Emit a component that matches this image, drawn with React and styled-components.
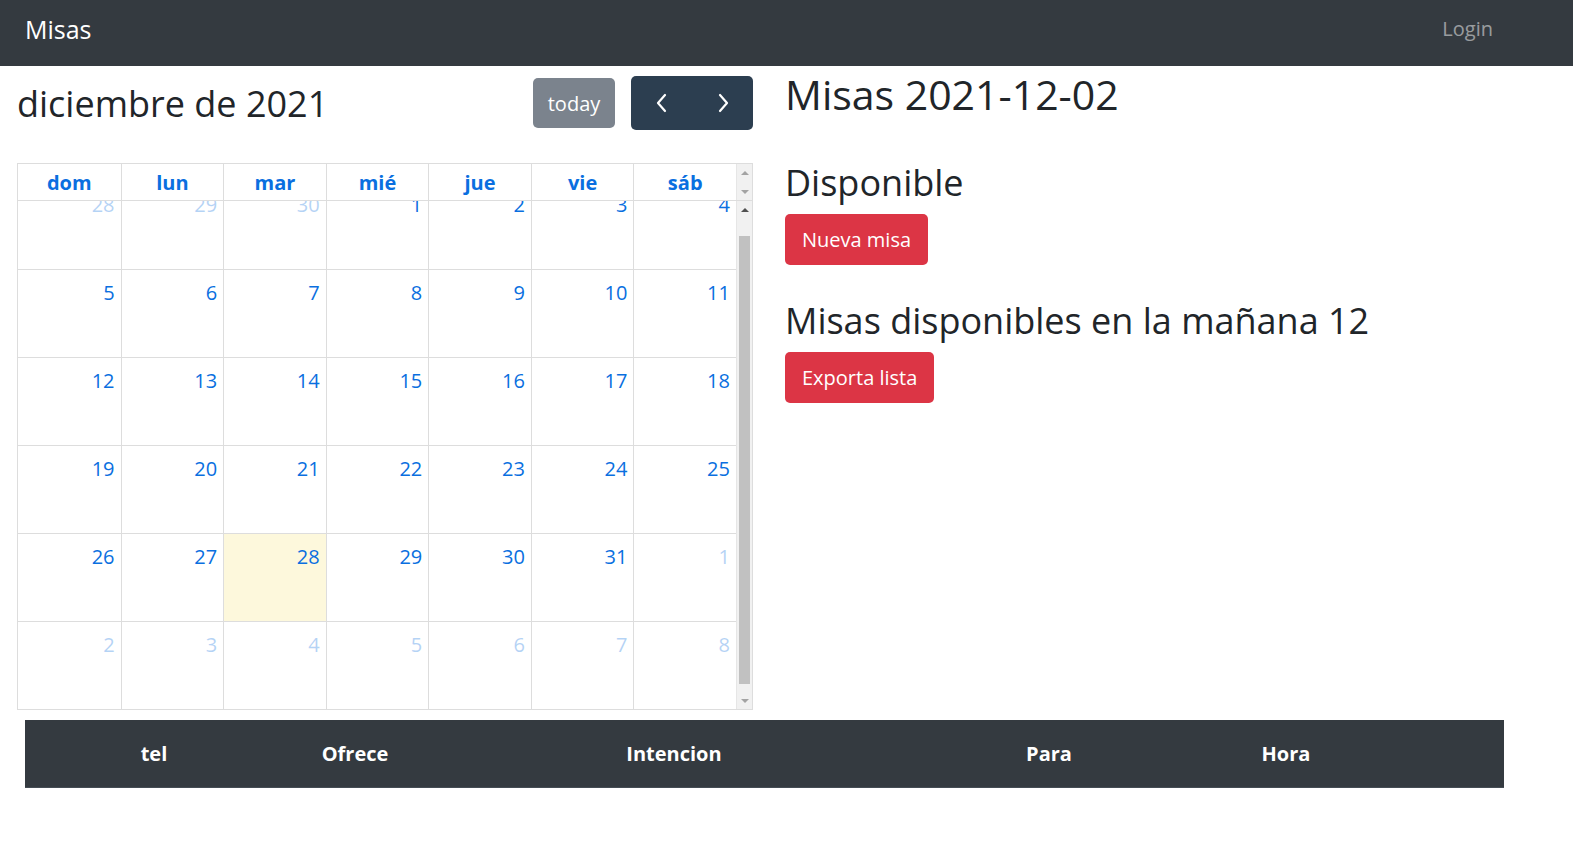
import React, { useEffect, useRef } from "react";
import styled, { createGlobalStyle } from "styled-components";

const GlobalStyle = createGlobalStyle`
  body {
    margin: 0;
    font-family: "Open Sans", "Noto Sans", sans-serif;
    font-size: 20px;
    color: #212529;
    background: #fff;
  }
  * { box-sizing: border-box; }
`;

const dayNames = ["dom", "lun", "mar", "mié", "jue", "vie", "sáb"];

const buildWeeks = () => {
  const weeks = [];
  const start = new Date(2021, 10, 28);
  for (let w = 0; w < 6; w++) {
    const row = [];
    for (let d = 0; d < 7; d++) {
      const date = new Date(start);
      date.setDate(start.getDate() + w * 7 + d);
      row.push({
        n: date.getDate(),
        other: date.getMonth() !== 11,
        today: date.getMonth() === 11 && date.getDate() === 28,
      });
    }
    weeks.push(row);
  }
  return weeks;
};

const Chevron = ({ dir }) => (
  <svg width="14" height="22" viewBox="0 0 14 22" fill="none" stroke="#fff" strokeWidth="2.2" strokeLinecap="round" strokeLinejoin="round">
    {dir === "left" ? <polyline points="10,3 3,11 10,19" /> : <polyline points="4,3 11,11 4,19" />}
  </svg>
);

const App = () => {
  const bodyRef = useRef(null);
  const weeks = buildWeeks();

  useEffect(() => {
    // the calendar body is scrolled a little, as in the screenshot
    if (bodyRef.current) bodyRef.current.scrollTop = 19;
  }, []);

  return (
    <>
      <GlobalStyle />
      <Navbar>
        <Brand>Misas</Brand>
        <NavLink>Login</NavLink>
      </Navbar>

      <Main>
        <Calendar>
          <Toolbar>
            <Title>diciembre de 2021</Title>
            <ToolButtons>
              <TodayBtn>today</TodayBtn>
              <BtnGroup>
                <NavBtn><Chevron dir="left" /></NavBtn>
                <NavBtn><Chevron dir="right" /></NavBtn>
              </BtnGroup>
            </ToolButtons>
          </Toolbar>

          <Grid>
            <HeadSection>
              <Row>
                {dayNames.map((d) => (
                  <HeadCell key={d}>{d}</HeadCell>
                ))}
              </Row>
              <Rail>
                <Arrow up faded />
                <Arrow faded />
              </Rail>
            </HeadSection>
            <BodySection>
              <Viewport ref={bodyRef}>
                {weeks.map((week, i) => (
                  <WeekRow key={i}>
                    {week.map((day, j) => (
                      <DayCell key={j} today={day.today}>
                        <DayNum other={day.other}>{day.n}</DayNum>
                      </DayCell>
                    ))}
                  </WeekRow>
                ))}
              </Viewport>
              <Rail>
                <Arrow up />
                <Track>
                  <Thumb />
                </Track>
                <Arrow faded />
              </Rail>
            </BodySection>
          </Grid>
        </Calendar>

        <Side>
          <H1>Misas 2021-12-02</H1>
          <H2 top={40}>Disponible</H2>
          <DangerBtn>Nueva misa</DangerBtn>
          <H2 top={32}>Misas disponibles en la mañana 12</H2>
          <DangerBtn>Exporta lista</DangerBtn>
        </Side>
      </Main>

      <TableWrap>
        <THead>
          <Th>tel</Th>
          <Th>Ofrece</Th>
          <Th>Intencion</Th>
          <Th>Para</Th>
          <Th>Hora</Th>
          <Th />
        </THead>
      </TableWrap>
    </>
  );
};

const Navbar = styled.nav`
  height: 66px;
  background: #343a40;
  display: flex;
  align-items: center;
  justify-content: space-between;
  padding: 0 80px 0 25px;
`;

const Brand = styled.span`
  color: #fff;
  font-size: 25px;
  margin-top: -8px;
`;

const NavLink = styled.span`
  color: rgba(255, 255, 255, 0.5);
  font-size: 20px;
  margin-top: -9px;
`;

const Main = styled.div`
  display: flex;
  gap: 30px;
  padding-left: 17px;
`;

const Calendar = styled.div`
  width: 736px;
  flex-shrink: 0;
  padding-top: 10px;
`;

const Toolbar = styled.div`
  display: flex;
  align-items: center;
  justify-content: space-between;
  margin-bottom: 33px;
`;

const Title = styled.h2`
  margin: 0;
  font-size: 36px;
  font-weight: 400;
  color: #212529;
`;

const ToolButtons = styled.div`
  display: flex;
  align-items: center;
  gap: 16px;
`;

const TodayBtn = styled.div`
  width: 82px;
  height: 50px;
  border-radius: 5px;
  background: #7b838d;
  color: #fff;
  font-size: 20px;
  display: flex;
  align-items: center;
  justify-content: center;
`;

const BtnGroup = styled.div`
  display: flex;
  background: #2c3e50;
  border-radius: 5px;
  height: 54px;
  width: 122px;
`;

const NavBtn = styled.div`
  flex: 1;
  display: flex;
  align-items: center;
  justify-content: center;
`;

const Grid = styled.div`
  border: 1px solid #ddd;
`;

const HeadSection = styled.div`
  display: flex;
  height: 37px;
  border-bottom: 1px solid #ddd;
`;

const BodySection = styled.div`
  display: flex;
  height: 508px;
`;

const Rail = styled.div`
  width: 16px;
  flex-shrink: 0;
  background: #f1f1f1;
  display: flex;
  flex-direction: column;
  justify-content: space-between;
  border-left: 1px solid #e6e6e6;
`;

const Arrow = styled.div`
  height: 17px;
  display: flex;
  align-items: center;
  justify-content: center;
  &::after {
    content: "";
    border-left: 4px solid transparent;
    border-right: 4px solid transparent;
    ${(p) => (p.up ? "border-bottom" : "border-top")}: 4px solid ${(p) => (p.faded ? "#a3a3a3" : "#505050")};
  }
`;

const Track = styled.div`
  flex: 1;
  padding: 18px 2px 8px 2px;
  display: flex;
`;

const Thumb = styled.div`
  flex: 1;
  background: #c1c1c1;
`;

const Row = styled.div`
  flex: 1;
  display: grid;
  grid-template-columns: repeat(7, 1fr);
`;

const HeadCell = styled.div`
  display: flex;
  align-items: center;
  justify-content: center;
  font-weight: 700;
  font-size: 20px;
  color: #0a6fe0;
  border-left: 1px solid #ddd;
  &:first-child { border-left: 0; }
`;

const Viewport = styled.div`
  flex: 1;
  overflow: hidden;
`;

const WeekRow = styled(Row)`
  height: 88px;
  border-bottom: 1px solid #ddd;
  &:last-child { border-bottom: 0; }
`;

const DayCell = styled.div`
  border-left: 1px solid #ddd;
  background: ${(p) => (p.today ? "#fdf8dc" : "transparent")};
  display: flex;
  justify-content: flex-end;
  align-items: flex-start;
  padding: 8px 6px 0 0;
  &:first-child { border-left: 0; }
`;

const DayNum = styled.span`
  font-size: 20px;
  line-height: 30px;
  color: #0a6fe0;
  opacity: ${(p) => (p.other ? 0.3 : 1)};
`;

const Side = styled.div`
  flex: 1;
  display: flex;
  flex-direction: column;
  align-items: flex-start;
  padding-left: 2px;
`;

const H1 = styled.h1`
  margin: 3px 0 0;
  font-size: 41px;
  line-height: 50px;
  font-weight: 500;
`;

const H2 = styled.h2`
  margin: ${(p) => p.top}px 0 7px;
  font-size: 36px;
  line-height: 48px;
  font-weight: 500;
`;

const DangerBtn = styled.div`
  height: 51px;
  padding: 0 17px;
  display: flex;
  align-items: center;
  background: #dc3545;
  color: #fff;
  font-size: 20px;
  border-radius: 5px;
`;

const TableWrap = styled.div`
  margin: 10px 69px 0 25px;
`;

const THead = styled.div`
  display: grid;
  grid-template-columns: 258px 144px 494px 256px 218px 1fr;
  height: 68px;
  background: #343a40;
  border-bottom: 1px solid #454d55;
`;

const Th = styled.div`
  display: flex;
  align-items: center;
  justify-content: center;
  color: #fff;
  font-weight: 700;
  font-size: 20px;
`;

export default App;
